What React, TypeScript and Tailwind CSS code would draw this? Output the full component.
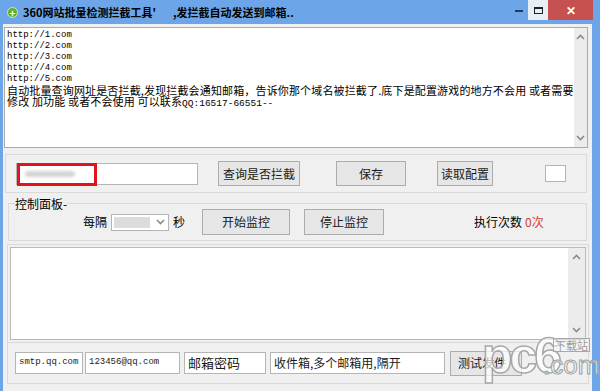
import React from "react"

const cjk = "font-['Noto_Sans_CJK_SC',sans-serif]"

function Chevron({ up }: { up?: boolean }) {
  return (
    <svg width="9" height="6" viewBox="0 0 9 6">
      <path
        d={up ? "M1 5 L4.5 1.5 L8 5" : "M1 1 L4.5 4.5 L8 1"}
        fill="none"
        stroke="#8a8a8a"
        strokeWidth="1.6"
      />
    </svg>
  )
}

function ScrollBar() {
  return (
    <div className="w-[17px] h-full bg-[#ececec] flex flex-col items-center justify-between py-[6px]">
      <Chevron up />
      <Chevron />
    </div>
  )
}

function Btn({ className, children }: { className: string; children: React.ReactNode }) {
  return (
    <div
      className={`${className} shrink-0 border border-[#acacac] bg-[#e6e6e6] flex items-center justify-center text-[12px] text-[#1a1a1a]`}
    >
      {children}
    </div>
  )
}

function Field({ className, children }: { className: string; children?: React.ReactNode }) {
  return (
    <div
      className={`${className} shrink-0 h-[22px] border border-[#b5b5b5] bg-white flex items-center px-[3px] text-[#1a1a1a] overflow-hidden whitespace-nowrap`}
    >
      {children}
    </div>
  )
}

export default function App() {
  return (
    <div className={`w-[600px] h-[391px] bg-[#6ca6e8] flex flex-col overflow-hidden ${cjk}`}>
      {/* title bar */}
      <div className="h-[24px] shrink-0 flex items-start">
        <div className="ml-[7px] mt-[7px] w-[11px] h-[11px] rounded-full bg-[#5fae2e] border border-[#cfe8b4] flex items-center justify-center">
          <span className="text-white text-[10px] font-bold leading-none">+</span>
        </div>
        <div className="ml-[5px] mt-[4px] text-[11px] font-bold text-black leading-[16px] whitespace-nowrap">
          360网站批量检测拦截工具'<span className="ml-[17px]">,发拦截自动发送到邮箱..</span>
        </div>
        <div className="ml-auto flex items-start">
          <div className="w-[18px] h-[20px] flex items-center justify-center">
            <div className="w-[8px] h-[2px] bg-[#1e3a5f] mt-[2px]" />
          </div>
          <div className="w-[20px] h-[20px] bg-[#e8eef6] flex items-center justify-center">
            <div className="w-[9px] h-[7px] border border-[#222] border-t-2" />
          </div>
          <div className="w-[45px] h-[20px] bg-[#c75050] flex items-center justify-center text-white text-[12px] font-bold">
            ✕
          </div>
          <div className="w-[7px]" />
        </div>
      </div>

      {/* client area */}
      <div className="flex-1 ml-[3px] mr-[8px] bg-[#f0f0f0] flex flex-col relative">
        {/* top textarea */}
        <div className="mt-[3px] ml-[1px] mr-[4px] h-[121px] border border-[#a9a9a9] bg-white flex">
          <div className="flex-1 pl-[2px] pt-[2px] text-black">
            <div className="font-mono text-[9px] leading-[11px]">http://1.com</div>
            <div className="font-mono text-[9px] leading-[11px]">http://2.com</div>
            <div className="font-mono text-[9px] leading-[11px]">http://3.com</div>
            <div className="font-mono text-[9px] leading-[11px]">http://4.com</div>
            <div className="font-mono text-[9px] leading-[11px]">http://5.com</div>
            <div className="whitespace-nowrap text-[11px] leading-[11px] tracking-[0.15px]">
              自动批量查询网址是否拦截,发现拦截会通知邮箱，告诉你那个域名被拦截了.底下是配置游戏的地方不会用 或者需要
            </div>
            <div className="whitespace-nowrap text-[11px] leading-[11px] tracking-[0.15px]">
              修改 加功能 或者不会使用 可以联系<span className="font-mono text-[9.5px] tracking-normal">QQ:16517-66551--</span>
            </div>
          </div>
          <ScrollBar />
        </div>

        {/* config row */}
        <div className="mt-[6px] ml-[2px] mr-[5px] h-[39px] border border-[#dadada] flex items-center">
          <div className="ml-[10px] relative">
            <Field className="w-[182px]" />
            <div className="absolute left-[1px] top-0 w-[80px] h-[23px] border-[3px] border-[#e0141e] flex items-center pl-[5px]">
              <div className="w-[50px] h-[6px] rounded-full bg-[#d4d4d4] blur-[1.5px]" />
            </div>
          </div>
          <Btn className="ml-[20px] w-[82px] h-[25px]">查询是否拦截</Btn>
          <Btn className="ml-[36px] w-[70px] h-[25px]">保存</Btn>
          <Btn className="ml-[31px] w-[56px] h-[25px]">读取配置</Btn>
          <div className="ml-[52px] w-[21px] h-[17px] border border-[#b5b5b5] bg-white" />
        </div>

        {/* control panel */}
        <div className="mt-[10px] ml-[5px] mr-[5px] h-[38px] border border-[#dadada] relative flex items-center">
          <div className="absolute left-[6px] -top-[7px] bg-[#f0f0f0] text-[12px] leading-[14px] text-black">
            控制面板-
          </div>
          <span className="ml-[74px] text-[12px] text-black">每隔</span>
          <div className="ml-[4px] w-[58px] h-[17px] border border-[#b5b5b5] bg-white flex items-center">
            <div className="ml-[2px] w-[36px] h-[11px] bg-[#dcdcdc]" />
            <div className="ml-auto mr-[3px]">
              <Chevron />
            </div>
          </div>
          <span className="ml-[4px] text-[12px] text-black">秒</span>
          <Btn className="ml-[17px] w-[88px] h-[26px]">开始监控</Btn>
          <Btn className="ml-[14px] w-[80px] h-[26px]">停止监控</Btn>
          <span className="ml-[90px] text-[12px] text-black">执行次数</span>
          <span className="ml-[3px] text-[12px] text-[#d23a35]">0次</span>
        </div>

        {/* log textarea */}
        <div className="mt-[3px] ml-[4px] mr-[3px] h-[99px] border border-[#dadada] p-[2px] flex">
          <div className="flex-1 border border-[#b9b9b9] bg-white flex justify-end">
            <ScrollBar />
          </div>
        </div>

        {/* mail row */}
        <div className="ml-[4px] mr-[3px] h-[41px] border border-[#dadada] border-t-0 flex items-center">
          <Field className="ml-[7px] w-[68px] font-mono text-[9px]">smtp.qq.com</Field>
          <Field className="ml-[2px] w-[95px] font-mono text-[9px]">123456@qq.com</Field>
          <Field className="ml-[4px] w-[82px] text-[13px]">邮箱密码</Field>
          <Field className="ml-[4px] w-[175px] text-[12px]">收件箱,多个邮箱用,隔开</Field>
          <Btn className="ml-[5px] w-[72px] h-[25px]">
            <span className="mr-[8px]">测试发件</span>
          </Btn>
        </div>

        {/* watermark */}
        <div className="absolute left-[479px] top-[307px] pointer-events-none font-['Liberation_Sans',sans-serif] text-[50px] font-bold leading-[50px] tracking-[-3px] text-white/70 [-webkit-text-stroke:1.5px_#a8a8a8]">
          pc6
        </div>
        <div className="absolute left-[550px] top-[314px] pointer-events-none text-[11px] leading-[12px] text-[#9a9a9a] border border-[#a8a8a8] px-[1px] bg-white/40">
          下载站
        </div>
        <div className="absolute left-[540px] top-[328px] pointer-events-none font-['Liberation_Sans',sans-serif] text-[26px] leading-[26px] text-white/60 [-webkit-text-stroke:1px_#a0a0a0]">
          .com
        </div>
      </div>
    </div>
  )
}
